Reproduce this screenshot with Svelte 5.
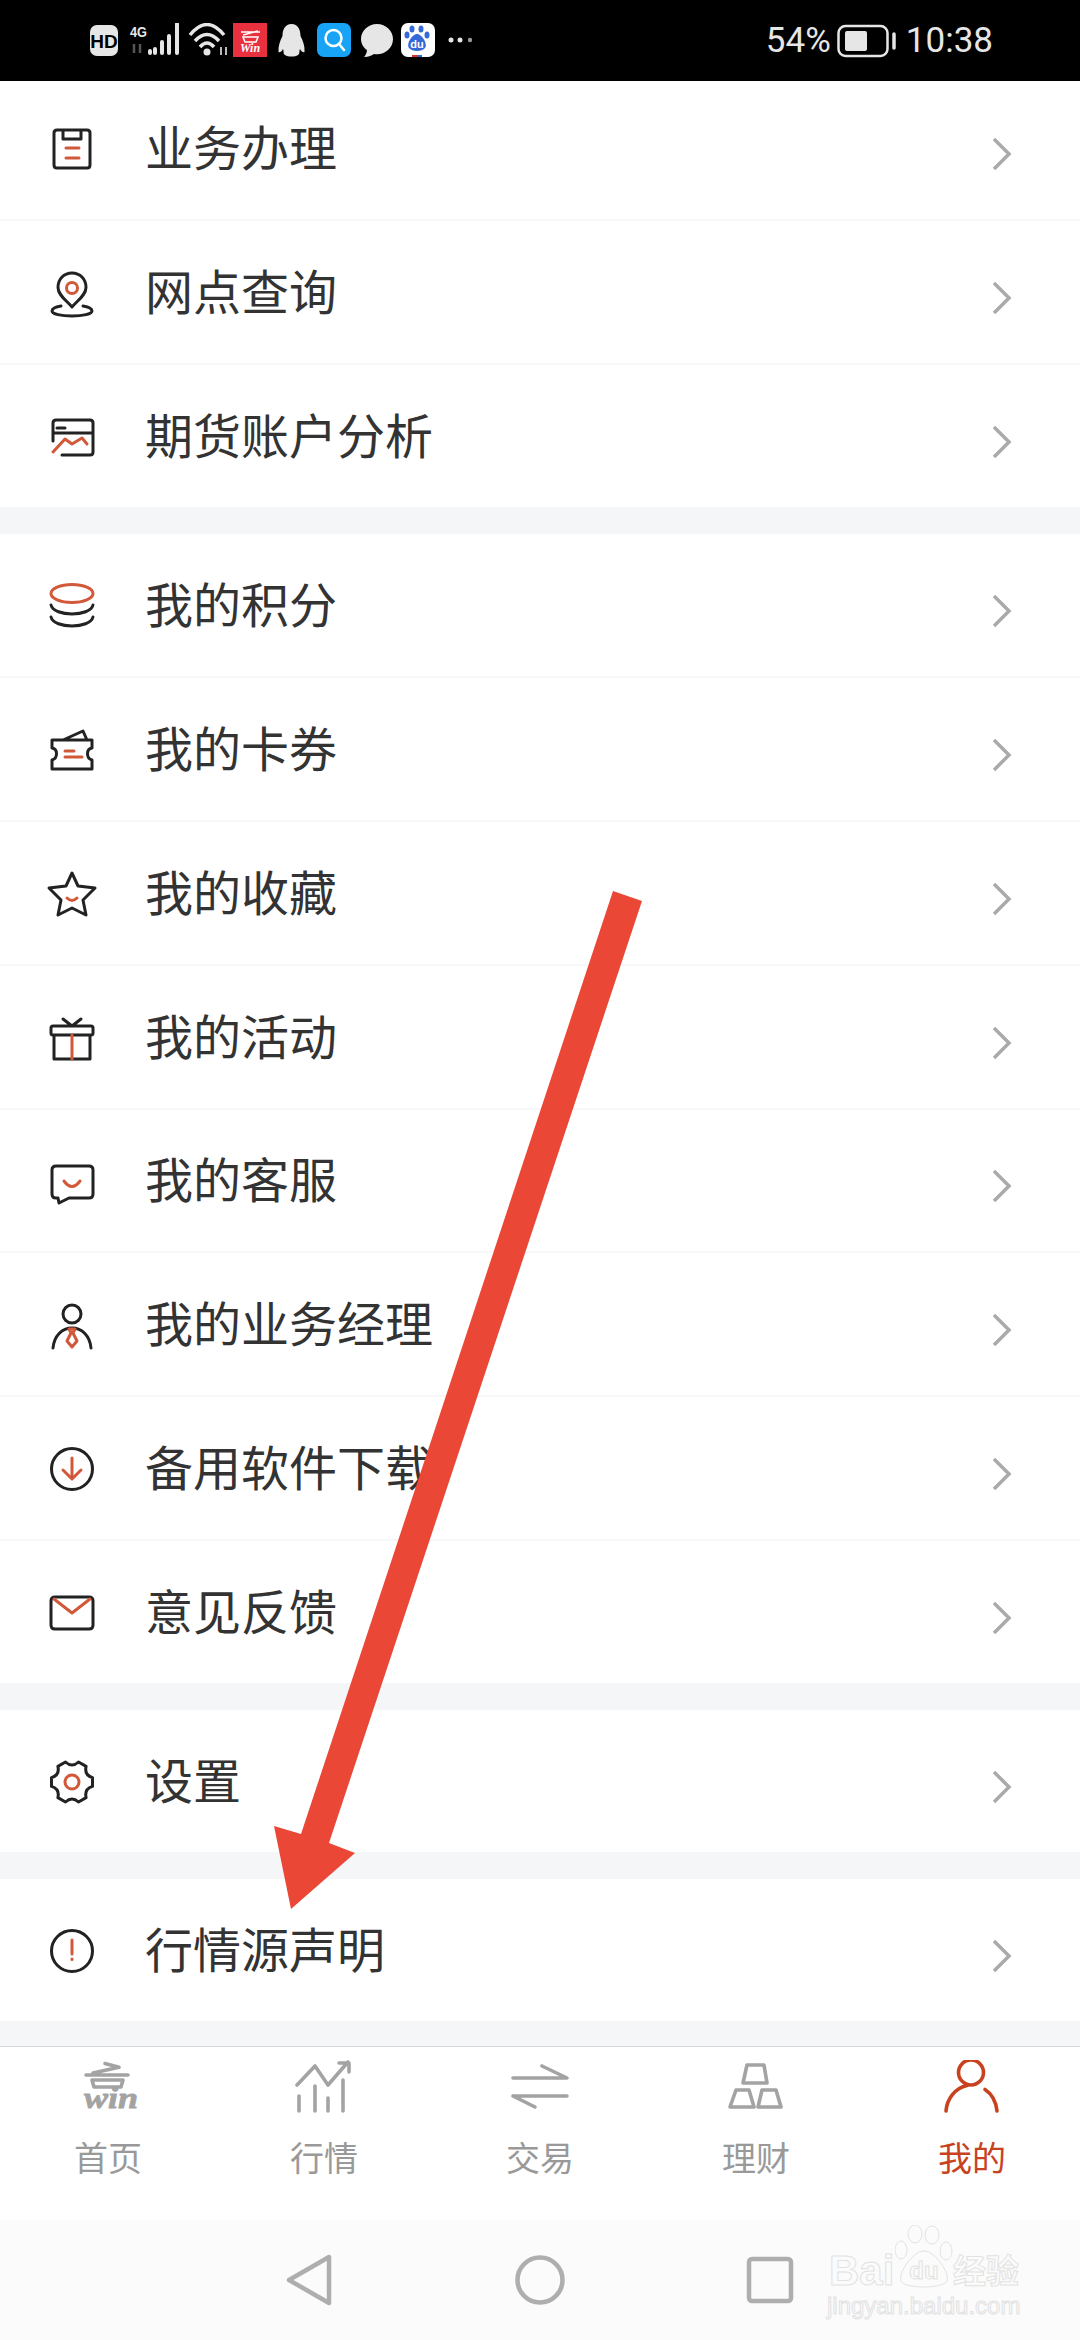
<script>
  const circle = (cx, cy, r) => `M${cx - r} ${cy}a${r} ${r} 0 1 0 ${2 * r} 0a${r} ${r} 0 1 0 ${-2 * r} 0Z`;

  function gear(cx, cy, outer, inner) {
    let d = '';
    const pt = (deg, r) => {
      const a = (deg * Math.PI) / 180;
      return `${(cx + r * Math.cos(a)).toFixed(1)} ${(cy + r * Math.sin(a)).toFixed(1)}`;
    };
    for (let k = 0; k < 6; k++) {
      const a = k * 60;
      d += `${k ? 'L' : 'M'}${pt(a - 12, outer)}L${pt(a + 12, outer)}Q${pt(a + 30, inner)} ${pt(a + 48, outer)}`;
    }
    return d + 'Z';
  }

  const icons = {
    task: {
      dark: 'M15 11H45Q48 11 48 14V46Q48 49 45 49H15Q12 49 12 46V14Q12 11 15 11ZM21 11V20H39V11',
      red: 'M24 29H37M24 39H37'
    },
    pin: {
      dark: 'M30 44C24 37 16 32 16 24.500C16 16 22 10 30 10C38 10 44 16 44 24.500C44 32 36 37 30 44ZM19 43C13 44 10 46 10 48C10 51 19 53 30 53C41 53 50 51 50 48C50 46 47 44 41 43',
      red: circle(30, 25, 5.5)
    },
    chart: {
      dark: 'M11 34V16Q11 13 14 13H48Q51 13 51 16V45Q51 48 48 48H20M11 26H51M15 21H23',
      red: 'M11 45L23 32L30 37L40 31L45 37'
    },
    coins: {
      dark: 'M9 29C12 41 48 41 51 29M9 41C12 53 48 53 51 41',
      red: 'M9 17.500a21 9 0 1 0 42 0a21 9 0 1 0 -42 0Z'
    },
    ticket: {
      dark: 'M21 20L41 11L45 20M10 20H50V28C44 29 44 38 50 40V49H10V40C16 38 16 29 10 28Z',
      red: 'M23 31H32M23 37H40'
    },
    star: {
      dark: 'M30 9L36 22L53 24L41 36L44 51L30 44L16 51L19 36L7 24L24 22Z',
      red: 'M25 34Q30 39 35 34'
    },
    gift: {
      dark: 'M11 18H49Q51 18 51 20V25Q51 27 49 27H11Q9 27 9 25V20Q9 18 11 18ZM12 27V51H48V27M21 11L30 18L39 11',
      red: 'M30 27V51'
    },
    chat: {
      dark: 'M14 15H47Q51 15 51 19V43Q51 47 47 47H27L17 52L16 47H14Q10 47 10 43V19Q10 15 14 15Z',
      red: 'M22 30Q30 41 38 30'
    },
    manager: {
      dark: circle(30, 19, 9) + 'M11 53C12 41 20 33 30 33C40 33 48 41 49 53',
      red: 'M27 34H33L31 38L35 46L30 52L25 46L29 38Z'
    },
    download: {
      dark: circle(30, 30, 20.500),
      red: 'M30 19V40M21 31L30 40L39 31'
    },
    mail: {
      dark: 'M13 14H47Q51 14 51 18V42Q51 46 47 46H13Q9 46 9 42V18Q9 14 13 14Z',
      red: 'M12 16L30 30L48 16'
    },
    gear: {
      dark: gear(30, 30, 21, 14),
      red: circle(30, 30, 7)
    },
    notice: {
      dark: circle(30, 30, 20.500),
      red: 'M30 19V33M30 38V38.500'
    }
  };

  const groups = [
    [
      { label: '业务办理', icon: 'task' },
      { label: '网点查询', icon: 'pin' },
      { label: '期货账户分析', icon: 'chart' }
    ],
    [
      { label: '我的积分', icon: 'coins' },
      { label: '我的卡券', icon: 'ticket' },
      { label: '我的收藏', icon: 'star' },
      { label: '我的活动', icon: 'gift' },
      { label: '我的客服', icon: 'chat' },
      { label: '我的业务经理', icon: 'manager' },
      { label: '备用软件下载', icon: 'download' },
      { label: '意见反馈', icon: 'mail' }
    ],
    [{ label: '设置', icon: 'gear' }],
    [{ label: '行情源声明', icon: 'notice' }]
  ];

  const tabs = [
    { label: '首页', key: 'home' },
    { label: '行情', key: 'market' },
    { label: '交易', key: 'trade' },
    { label: '理财', key: 'gold' },
    { label: '我的', key: 'me' }
  ];
  const active = 'me';
</script>

<div class="app">
  <header class="status">
    <div class="notices">
      <svg width="34" height="36" viewBox="0 0 34 36"><rect x="0" y="2" width="28" height="31" rx="7" fill="#e6e6e6" /><text x="14" y="24.500" class="hd">HD</text></svg>
      <svg width="60" height="36" viewBox="0 0 60 36">
        <text x="6" y="14" class="net" textLength="17" lengthAdjust="spacingAndGlyphs">4G</text>
        <path d="M10 21V30M16 21V30" stroke="#555" stroke-width="2.500" />
        <path d="M26 28V30M31 26V30M38 19V30M45 13V30M53 1V30" stroke="#e6e6e6" stroke-width="4" stroke-linecap="round" />
      </svg>
      <svg width="46" height="36" viewBox="0 0 46 36">
        <path d="M6 12Q23 -9 40 12M11 18Q23 5 35 18M16 24Q23 16 30 24" fill="none" stroke="#e6e6e6" stroke-width="3.500" />
        <circle cx="23" cy="29" r="3.500" fill="#e6e6e6" />
        <path d="M37 24V32M42 24V32" stroke="#bbb" stroke-width="2" />
      </svg>
      <svg width="42" height="36" viewBox="0 0 42 36">
        <rect x="3" y="0" width="34" height="34" fill="#e8303f" />
        <path d="M11 9H30M13 12L28 8M13 14H28L26 19H15Z" fill="none" stroke="#fff" stroke-width="1.500" />
        <text x="20" y="29" class="winmini">Win</text>
      </svg>
      <svg width="39" height="36" viewBox="0 0 39 36">
        <path d="M19.500 1C13 1 10.500 7 10.500 13C8 18 6 23 6.500 29C8 30 10 28 11 26C12 28 11 31 13 32C16 34 23 34 26 32C28 31 27 28 28 26C29 28 31 30 32.500 29C33 23 31 18 28.500 13C28.500 7 26 1 19.500 1Z" fill="#e6e6e6" />
      </svg>
      <svg width="45" height="36" viewBox="0 0 45 36">
        <rect x="6" y="0" width="34" height="34" rx="7" fill="#18a4f6" />
        <circle cx="22.500" cy="15" r="8" fill="none" stroke="#fff" stroke-width="2.500" />
        <path d="M28 21L33 27" stroke="#fff" stroke-width="2.500" stroke-linecap="round" />
      </svg>
      <svg width="41" height="36" viewBox="0 0 41 36">
        <path d="M21 1C12 1 5 8 5 16C5 21 8 25 11 27C11 30 9 33 8 34C13 34 16 32 18 31C27 33 37 26 37 16C37 8 30 1 21 1Z" fill="#e6e6e6" />
      </svg>
      <svg width="45" height="36" viewBox="0 0 45 36">
        <rect x="4" y="0" width="34" height="34" rx="7" fill="#fff" />
        <ellipse cx="15" cy="6" rx="2.500" ry="3.500" fill="#3568d8" />
        <ellipse cx="24" cy="6" rx="2.500" ry="3.500" fill="#3568d8" />
        <ellipse cx="10" cy="12" rx="2.500" ry="3.500" fill="#3568d8" />
        <ellipse cx="30" cy="12" rx="2.500" ry="3.500" fill="#3568d8" />
        <path d="M20 11C15 11 9 21 12 25C15 29 25 29 28 25C31 21 25 11 20 11Z" fill="#3568d8" />
        <text x="20" y="25" class="dumini">du</text>
        <path d="M15 33H20" stroke="#d33" stroke-width="2" />
        <path d="M20 33H25" stroke="#36c" stroke-width="2" />
      </svg>
      <svg width="38" height="36" viewBox="0 0 38 36">
        <circle cx="9" cy="17" r="2.500" fill="#e6e6e6" />
        <circle cx="18" cy="17" r="2.500" fill="#e6e6e6" />
        <circle cx="28" cy="17" r="2.200" fill="#999" />
      </svg>
    </div>
    <div class="system">
      <span class="pct">54%</span>
      <svg class="battery" width="60" height="34" viewBox="0 0 60 34">
        <rect x="1.500" y="2" width="49" height="30" rx="7" fill="none" stroke="#e6e6e6" stroke-width="2.500" />
        <rect x="8" y="7" width="22" height="20" rx="2" fill="#e6e6e6" />
        <path d="M57 10V24" stroke="#e6e6e6" stroke-width="3.500" stroke-linecap="round" />
      </svg>
      <span class="time">10:38</span>
    </div>
  </header>

  <main class="list">
    {#each groups as group}
      <section class="group">
        {#each group as item}
          <div class="row">
            <svg class="icon" width="60" height="60" viewBox="0 0 60 60">
              <path class="dark" d={icons[item.icon].dark} />
              <path class="red" d={icons[item.icon].red} />
            </svg>
            <span class="label">{item.label}</span>
            <svg class="chevron" width="24" height="36" viewBox="0 0 24 36">
              <path d="M4 3L19 18L4 33" />
            </svg>
          </div>
        {/each}
      </section>
    {/each}
  </main>

  <nav class="tabs">
    {#each tabs as tab}
      <div class="tab" class:on={tab.key === active}>
        <svg width="64" height="56" viewBox="0 0 64 56">
          {#if tab.key === 'home'}
            <path d="M17 13L43 7.300L29 3.500M10 15H52M16 20H47L45 27H18Z" />
            <text x="8" y="48" class="wintext" textLength="54" lengthAdjust="spacingAndGlyphs">win</text>
          {:else if tab.key === 'market'}
            <path d="M5 25L23 6L36 25L56 2M47 3H57V12M7 36V51M23 26V51M36 38V51M51 20V51" />
          {:else if tab.key === 'trade'}
            <path d="M5 18H59L34 6M5 36H59M5 36L27 47" />
          {:else if tab.key === 'gold'}
            <path d="M23 5H40L43 23H19ZM12 30H25L30 47H6ZM38 30H52L57 47H34Z" />
          {:else}
            <circle cx="31" cy="12.500" r="12.500" />
            <path d="M6 51C7 39 15 28 27 25.500M45 29.500C52 34 56 42 57 51" />
          {/if}
        </svg>
        <span>{tab.label}</span>
      </div>
    {/each}
  </nav>

  <footer class="nav">
    <svg width="60" height="60" viewBox="0 0 60 60"><path d="M49 7V53L9 30Z" /></svg>
    <svg width="60" height="60" viewBox="0 0 60 60"><circle cx="30" cy="30" r="22.500" /></svg>
    <svg width="60" height="60" viewBox="0 0 60 60"><rect x="9" y="9" width="42" height="42" rx="3" /></svg>
    <div class="mark">
      <span class="bai">Bai</span>
      <svg class="paw" width="58" height="66" viewBox="0 0 58 66">
        <ellipse cx="20" cy="9" rx="7" ry="9" />
        <ellipse cx="37" cy="10" rx="7" ry="9" />
        <ellipse cx="6" cy="25" rx="6" ry="9" />
        <ellipse cx="51" cy="26" rx="6" ry="9" />
        <path d="M29 26C18 26 3 48 6 56C9 64 48 64 52 56C55 48 40 26 29 26Z" />
        <text x="29" y="54" class="du">du</text>
      </svg>
      <span class="jy">经验</span>
      <span class="url">jingyan.baidu.com</span>
    </div>
  </footer>

  <svg class="arrow" width="1080" height="2340" viewBox="0 0 1080 2340">
    <path d="M613 891L642 901L329 1843L355 1853L291 1909L274 1826L301 1834Z" />
  </svg>
</div>

<style>
  :global(body) {
    margin: 0;
    background: #fff;
  }
  .app {
    position: relative;
    width: 1080px;
    height: 2340px;
    display: flex;
    flex-direction: column;
    overflow: hidden;
    font-family: "Noto Sans CJK SC", "Noto Sans", sans-serif;
  }

  .status {
    height: 81px;
    flex: none;
    background: #000;
    display: flex;
    justify-content: space-between;
    align-items: center;
    padding: 0 87px 0 90px;
    box-sizing: border-box;
    color: #e6e6e6;
  }
  .notices {
    display: flex;
    align-items: center;
  }
  .system {
    display: flex;
    align-items: center;
    font-family: Roboto, "Noto Sans", sans-serif;
    font-size: 35px;
    line-height: 40px;
  }
  .battery {
    margin: 0 9px 0 6px;
  }
  .hd {
    font: 700 19px "Liberation Sans", sans-serif;
    fill: #000;
    text-anchor: middle;
  }
  .net {
    font: 700 15px "Liberation Sans", sans-serif;
    fill: #e6e6e6;
  }
  .winmini {
    font: italic 700 12px "Liberation Serif", serif;
    fill: #fff;
    text-anchor: middle;
  }
  .dumini {
    font: 700 11px "Liberation Sans", sans-serif;
    fill: #fff;
    text-anchor: middle;
  }

  .list {
    flex: 1;
    min-height: 0;
    overflow: hidden;
    background: #f5f6f8;
    display: flex;
    flex-direction: column;
    gap: 27px;
  }
  .group {
    flex: none;
    display: flex;
    flex-direction: column;
    gap: 2px;
    background: #f6f7f8;
  }
  .group:first-child {
    margin-top: -3.7px;
  }
  .row {
    height: 141.9px;
    flex: none;
    background: #fff;
    display: flex;
    align-items: center;
  }
  .icon {
    flex: none;
    margin-left: 42px;
    margin-top: 2px;
    fill: none;
    stroke-width: 3;
    stroke-linejoin: round;
    stroke-linecap: round;
  }
  .dark {
    stroke: #222;
  }
  .red {
    stroke: #d2583a;
  }
  .label {
    margin-left: 43px;
    margin-bottom: 6px;
    font-size: 48px;
    line-height: 60px;
    color: #333;
  }
  .chevron {
    flex: none;
    margin-left: auto;
    margin-right: 66px;
    margin-top: 12px;
    fill: none;
    stroke: #aaa;
    stroke-width: 3.5;
  }

  .tabs {
    height: 174px;
    flex: none;
    box-sizing: border-box;
    border-top: 1px solid #d6d7d9;
    background: #fff;
    display: grid;
    grid-template-columns: repeat(5, 1fr);
  }
  .tab {
    display: flex;
    flex-direction: column;
    align-items: center;
    padding-top: 13px;
    font-size: 34px;
    line-height: 44px;
    color: #999;
  }
  .tab span {
    margin-top: 19px;
  }
  .tab svg {
    fill: none;
    stroke: #a3a3a3;
    stroke-width: 3.6;
    stroke-linejoin: round;
    stroke-linecap: round;
  }
  .tab.on {
    color: #c8421f;
  }
  .tab.on svg {
    stroke: #c8421f;
  }
  .wintext {
    font: italic 700 30px "Liberation Serif", serif;
    fill: #a3a3a3;
    stroke-width: 0.8;
  }

  .nav {
    position: relative;
    height: 120px;
    flex: none;
    background: #fbfbfb;
    display: grid;
    grid-template-columns: repeat(3, 230px);
    justify-content: center;
    justify-items: center;
    align-items: center;
  }
  .nav > svg {
    fill: none;
    stroke: #aeaeae;
    stroke-width: 4.5;
    stroke-linejoin: round;
    overflow: visible;
  }
  .mark {
    position: absolute;
    left: 827px;
    top: 0;
    width: 200px;
    height: 120px;
    color: #fbfbfb;
    -webkit-text-stroke: 1px #e2e2e2;
  }
  .mark span {
    position: absolute;
    white-space: nowrap;
  }
  .bai {
    left: 2px;
    top: 29px;
    font: 700 42px/44px "Liberation Sans", sans-serif;
  }
  .paw {
    position: absolute;
    left: 68px;
    top: 5px;
    fill: #fbfbfb;
    stroke: #e2e2e2;
    stroke-width: 1;
  }
  .du {
    font: 700 24px "Liberation Sans", sans-serif;
    text-anchor: middle;
  }
  .jy {
    left: 126px;
    top: 31px;
    font-size: 33px;
    line-height: 36px;
    font-weight: 700;
  }
  .url {
    left: 0;
    top: 72px;
    font: 400 24px/28px "Liberation Sans", sans-serif;
  }

  .arrow {
    position: absolute;
    left: 0;
    top: 0;
    pointer-events: none;
  }
  .arrow path {
    fill: #eb4737;
  }
</style>
